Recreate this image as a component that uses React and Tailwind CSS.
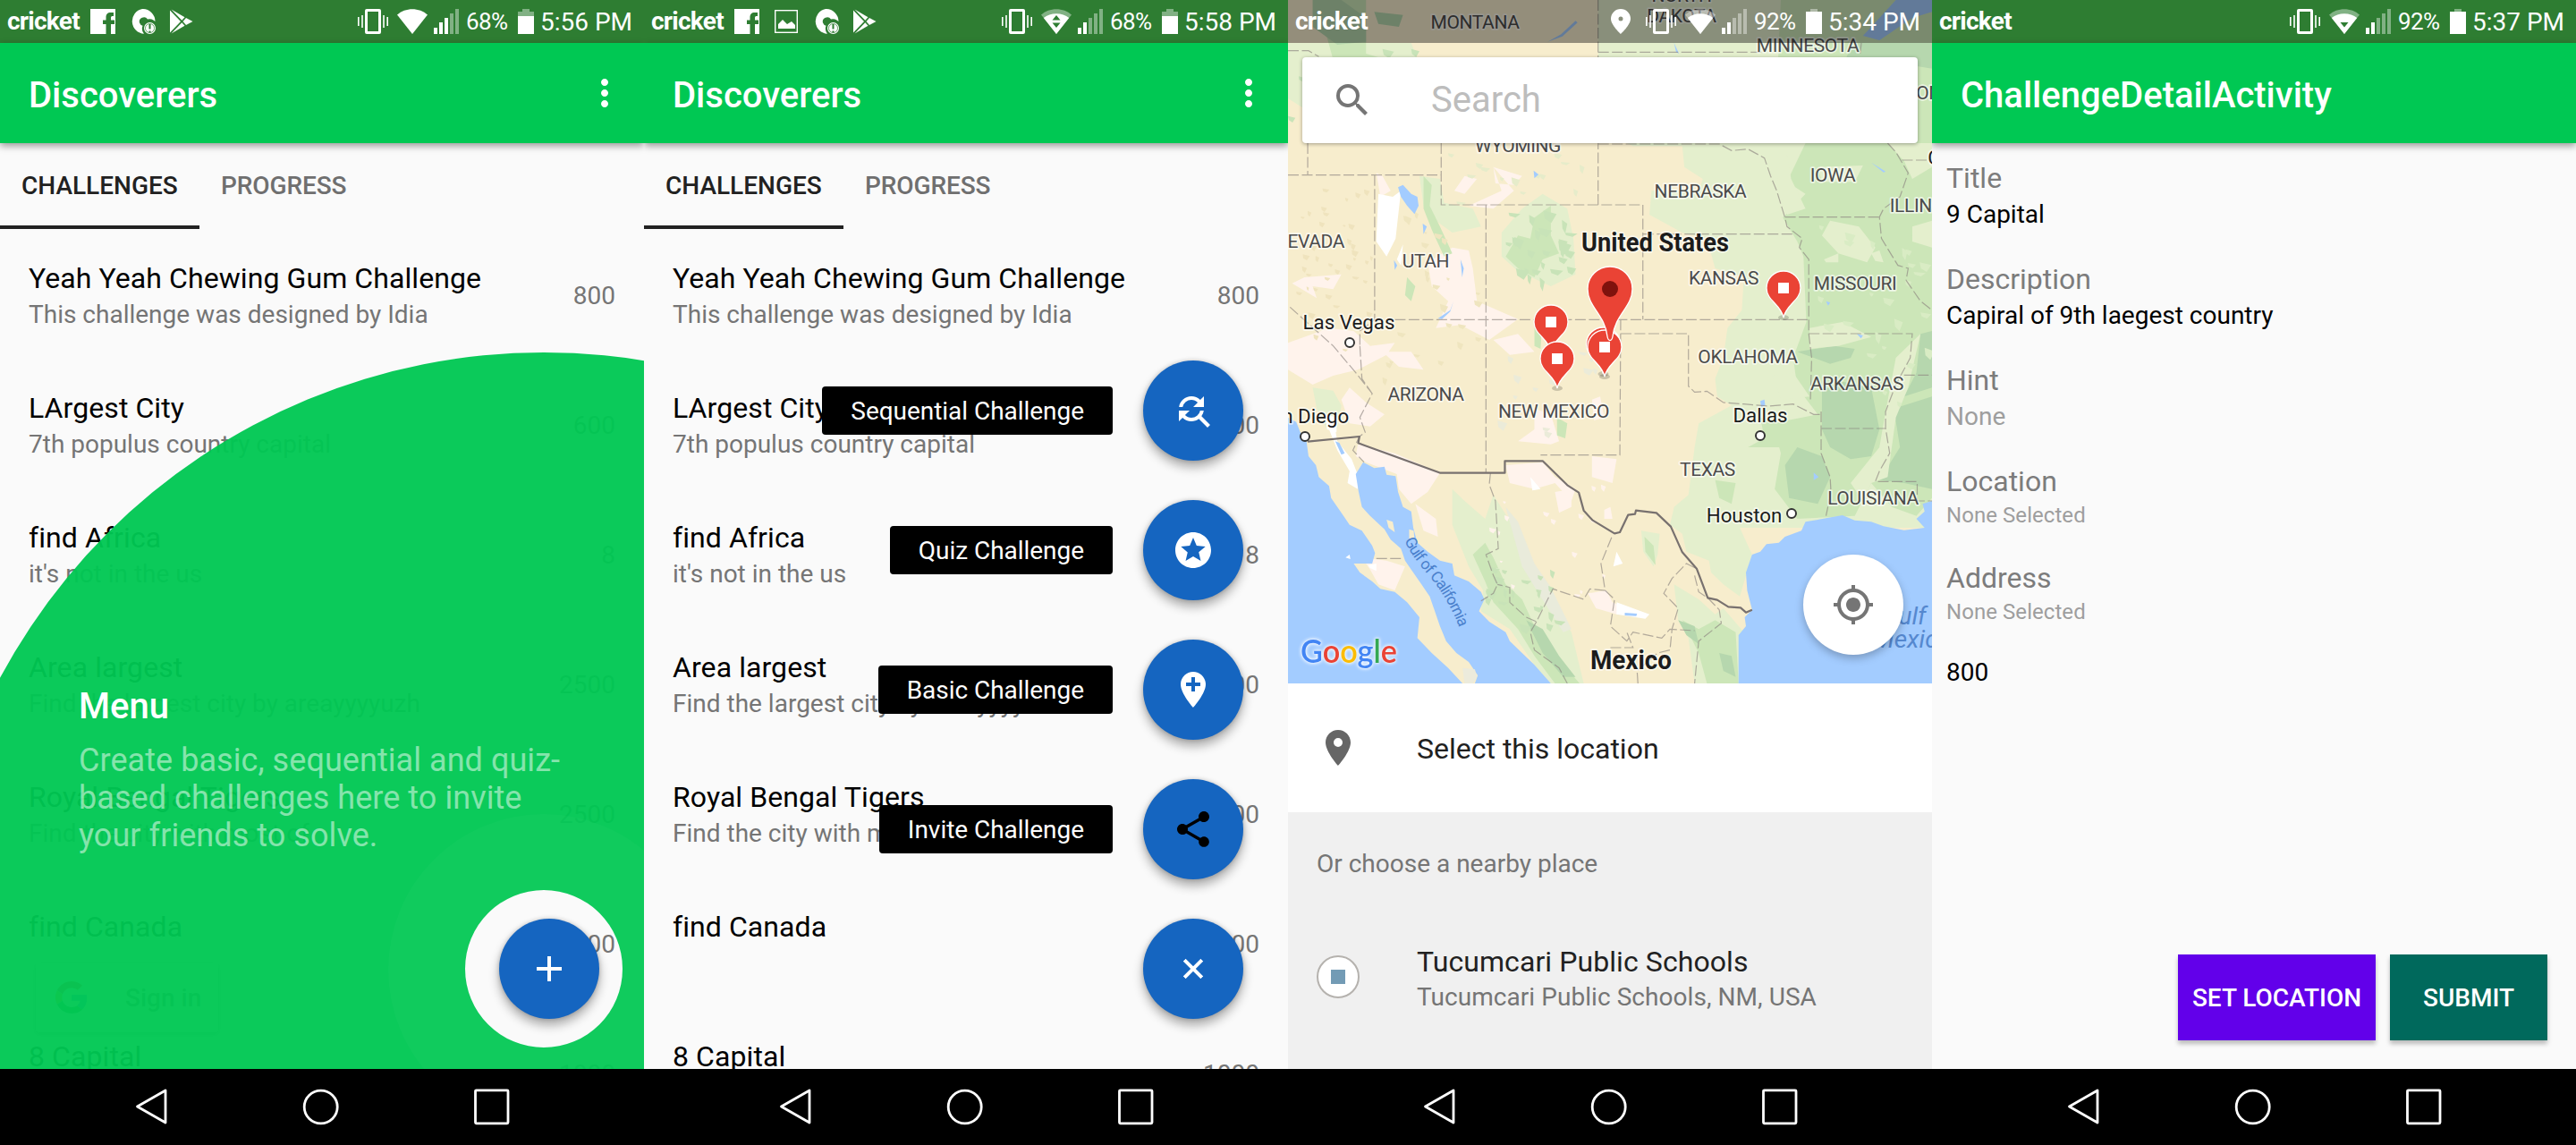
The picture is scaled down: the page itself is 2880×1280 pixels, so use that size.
import React from "react";
import {
  MdAddLocation,
  MdFindReplace,
  MdMoreVert,
  MdMyLocation,
  MdPlace,
  MdSearch,
  MdShare,
  MdStars,
} from "react-icons/md";

/* ---------- status bar ---------- */

function FacebookIcon() {
  return (
    <svg viewBox="0 0 28 28" className="h-7 w-7 shrink-0">
      <path
        fill="#fff"
        fillRule="evenodd"
        d="M0 0h28v28H23V17h4v-4.500h-4V10c0-1.500.6-2 2-2h1V4h-3c-4 0-5.500 2-5.500 5.500v3H14V17h3.500v11H0z"
      />
    </svg>
  );
}

function ImageIcon() {
  return (
    <svg viewBox="0 0 28 28" className="h-7 w-7 shrink-0">
      <rect x="1.700" y="1.700" width="24.600" height="24.600" fill="none" stroke="#fff" strokeWidth="1.400" />
      <path d="M5 22v-5l5-5 5 5 5-3 4 4v4z" fill="#fff" />
    </svg>
  );
}

function DiscAlertIcon() {
  return (
    <svg viewBox="0 0 29 28" className="h-7 w-[29px] shrink-0">
      <path
        fill="#fff"
        fillRule="evenodd"
        d="M14 0a14 14 0 0 1 14.500 14l-2-1.500a8 8 0 0 0-6.500-1 5 5 0 0 0-9 4 5 5 0 0 0 3.500 3.200 9 9 0 0 0 1.500 9A14 14 0 0 1 14 0z"
      />
      <circle cx="22.500" cy="21.500" r="6.500" fill="#fff" />
      <path d="M22.500 17v5.500M22.500 24.500v2" stroke="#2e7d32" strokeWidth="2" />
      <circle cx="22.500" cy="21.500" r="5" fill="none" stroke="#2e7d32" strokeWidth=".7" />
    </svg>
  );
}

function PlayIcon() {
  return (
    <svg viewBox="0 0 26 28" className="h-7 w-[26px] shrink-0" fill="#fff">
      <path d="M0 1.500v25L12 14z" />
      <path d="M1.500.5 13.300 12.700l3.200-3.400z" />
      <path d="M1.500 27.500 13.300 15.300l3.200 3.400z" />
      <path d="m18 10 7.500 4-7.500 4-3.500-4z" />
    </svg>
  );
}

function VibrateIcon() {
  return (
    <svg viewBox="0 0 34 28" className="h-7 w-[34px] shrink-0">
      <path
        fill="#fff"
        fillRule="evenodd"
        d="M10 0h14a2 2 0 0 1 2 2v24a2 2 0 0 1-2 2H10a2 2 0 0 1-2-2V2a2 2 0 0 1 2-2zM11 3v22h12V3z"
      />
      <path d="M.8 9v10M5 7v14M33.200 9v10M29 7v14" stroke="#fff" strokeWidth="1.600" />
    </svg>
  );
}

function WifiIcon({ mode }) {
  return (
    <svg viewBox="0 0 34 28" className="h-7 w-[34px] shrink-0">
      {mode === "full" ? (
        <path d="M17 28 0 6.500C9-2 25-2 34 6.500z" fill="#fff" />
      ) : (
        <>
          <path d="M17 28 0 6.500C9-2 25-2 34 6.500z" fill="#fff" opacity=".4" />
          <path d="M17 28 2.800 10C10 3.500 24 3.500 31.200 10z" fill="#fff" />
        </>
      )}
      {mode === "both" && (
        <g fill="#2e7d32">
          <path d="M12.500 12.500 17 7l4.500 5.500z" />
          <path d="M12.500 15.500h9L17 21z" />
        </g>
      )}
      {mode === "down" && <path d="M12.500 15h9L17 20.500z" fill="#2e7d32" />}
    </svg>
  );
}

function SignalIcon({ level }) {
  const heights = [7, 13, 18, 23, 28];
  return (
    <svg viewBox="0 0 28 28" className="h-7 w-7 shrink-0">
      {heights.map((h, i) => (
        <rect key={h} x={i * 6} y={28 - h} width="4" height={h} fill="#fff" opacity={i < level ? 1 : 0.4} />
      ))}
    </svg>
  );
}

function BatteryIcon({ top }) {
  return (
    <svg viewBox="0 0 18 28" className="h-7 w-[18px] shrink-0" fill="#fff">
      <path d="M5 0h8v3h5v25H0V3h5z" opacity=".4" />
      <rect y={top} width="18" height={28 - top} />
    </svg>
  );
}

function StatusBar({ left, pin, wifi, signal, percent, battery, time, className }) {
  return (
    <div className={"flex h-12 items-center pl-2 text-white " + className}>
      <span className="w-[93px] text-[28px] font-bold tracking-[-0.75px]">cricket</span>
      <div className="flex gap-4">{left}</div>
      <div className="ml-auto flex items-center">
        {pin && (
          <svg viewBox="0 0 22 28" className="mr-[17px] h-7 w-[22px]">
            <path fill="#fff" fillRule="evenodd" d="M11 0a11 11 0 0 1 11 11c0 7-11 17-11 17S0 18 0 11A11 11 0 0 1 11 0zm0 8.500a2.500 2.500 0 1 0 0 5 2.500 2.500 0 0 0 0-5z" />
          </svg>
        )}
        <VibrateIcon />
        <span className="ml-2.5 flex">
          <WifiIcon mode={wifi} />
        </span>
        <span className="ml-[7px] flex">
          <SignalIcon level={signal} />
        </span>
        <span className="ml-2 w-[58px] pt-px text-[26px] tracking-[-0.6px]">{percent}</span>
        <BatteryIcon top={battery} />
        <span className="ml-[7px] w-[116px] whitespace-nowrap pt-px text-[28px]">{time}</span>
      </div>
    </div>
  );
}

/* ---------- shared chrome ---------- */

function AppBar({ title, menu }) {
  return (
    <div className="relative z-10 flex h-28 items-center justify-between bg-[#00c853] pl-8 pr-5 text-white shadow-[0_3px_8px_rgba(0,0,0,0.4)]">
      <h1 className="pt-[5px] text-[40px] font-medium leading-[52px]">{title}</h1>
      {menu && <MdMoreVert className="h-12 w-12" />}
    </div>
  );
}

function NavBar() {
  return (
    <div className="relative z-30 flex h-[85px] shrink-0 items-center bg-black">
      <svg viewBox="0 0 720 85" className="h-[85px] w-[720px]" fill="none" stroke="#fff" strokeWidth="2.800">
        <path d="M185 24v36l-31.500-18z" strokeLinejoin="round" />
        <ellipse cx="358.700" cy="42.500" rx="18.500" ry="18.300" />
        <rect x="531.500" y="23.800" width="36.500" height="37" rx="1" />
      </svg>
    </div>
  );
}

function Phone({ children }) {
  return <section className="relative flex h-[1280px] w-[720px] flex-col overflow-hidden bg-[#fafafa]">{children}</section>;
}

function Tabs() {
  return (
    <div className="flex h-24 text-[28px] font-medium leading-[96px]">
      <div className="w-[223px] border-b-4 border-[#212121] pl-6 text-[#212121]">CHALLENGES</div>
      <div className="pl-6 tracking-[-0.1px] text-[#6f6f6f]">PROGRESS</div>
    </div>
  );
}

const challenges = [
  { title: "Yeah Yeah Chewing Gum Challenge", sub: "This challenge was designed by Idia", points: 800 },
  { title: "LArgest City", sub: "7th populus country capital", points: 600 },
  { title: "find Africa", sub: "it's not in the us", points: 8 },
  { title: "Area largest", sub: "Find the largest city by areayyyyuzh", points: 2500 },
  { title: "Royal Bengal Tigers", sub: "Find the city with most of", points: 2500 },
  { title: "find Canada", sub: "", points: 1000 },
  { title: "8 Capital", sub: "", points: 1000 },
];

function ChallengeList() {
  return (
    <ul className="pt-[2px]">
      {challenges.map((c) => (
        <li key={c.title} className="flex h-[145px] items-center justify-between px-8">
          <div>
            <div className="h-10 text-[32px] leading-10 tracking-[0.08px] text-black">{c.title}</div>
            <div className="h-10 text-[28px] leading-[42px] text-[#757575]">{c.sub}</div>
          </div>
          <div className="text-[28px] leading-10 text-[#757575]">{c.points}</div>
        </li>
      ))}
    </ul>
  );
}

function Fab({ children }) {
  return (
    <button className="flex h-28 w-28 shrink-0 items-center justify-center rounded-full bg-[#1565c0] text-white shadow-[0_7px_12px_rgba(0,0,0,0.32),0_0_5px_rgba(0,0,0,0.18)]">
      {children}
    </button>
  );
}

/* ---------- screen 1: feature discovery ---------- */

function DiscoveryScreen() {
  return (
    <Phone>
      <StatusBar
        className="bg-[#2e7d32]"
        left={
          <>
            <FacebookIcon />
            <DiscAlertIcon />
            <PlayIcon />
          </>
        }
        wifi="full"
        signal={3}
        percent="68%"
        battery={8}
        time="5:56 PM"
      />
      <AppBar title="Discoverers" menu />
      <div className="relative h-[1035px] overflow-hidden">
        <Tabs />
        <ChallengeList />
        <div className="absolute left-10 top-[916px] flex h-[78px] w-[204px] items-center rounded bg-white pl-[22px] text-[28px] font-medium text-[#757575] shadow-[0_2px_5px_rgba(0,0,0,0.4)]">
          <svg viewBox="0 0 48 48" className="mr-[42px] h-9 w-9">
            <path fill="#EA4335" d="M24 9.500c3.500 0 6.700 1.200 9.200 3.600l6.900-6.900C35.900 2.400 30.500 0 24 0 14.600 0 6.500 5.400 2.600 13.200l8 6.200C12.400 13.700 17.700 9.500 24 9.500z" />
            <path fill="#4285F4" d="M47 24.600c0-1.600-.2-3.100-.4-4.600H24v9h12.900c-.6 3-2.300 5.500-4.800 7.200l7.700 6C44.400 38 47 32 47 24.600z" />
            <path fill="#FBBC05" d="M10.500 28.600a14.500 14.500 0 0 1 0-9.200l-8-6.200a24 24 0 0 0 0 21.600z" />
            <path fill="#34A853" d="M24 48c6.500 0 11.900-2.100 15.900-5.800l-7.700-6c-2.200 1.500-4.900 2.300-8.200 2.300-6.300 0-11.600-4.200-13.500-9.900l-8 6.200C6.500 42.600 14.600 48 24 48z" />
          </svg>
          <span className="pt-0.5">Sign in</span>
        </div>
        <svg viewBox="0 0 720 1035" className="absolute left-0 top-0 h-[1035px] w-[720px]">
          <path
            fill="#00c853"
            fillOpacity=".955"
            fillRule="evenodd"
            d="M-82 924a690 690 0 1 1 1380 0a690 690 0 1 1-1380 0zM520 923a88 88 0 1 0 176 0a88 88 0 1 0-176 0z"
          />
          <path
            fill="#fff"
            fillOpacity=".025"
            fillRule="evenodd"
            d="M434 924a174 174 0 1 1 348 0a174 174 0 1 1-348 0zM520 923a88 88 0 1 0 176 0a88 88 0 1 0-176 0z"
          />
        </svg>
        <div className="absolute left-[88px] top-[606px] w-[560px] text-white">
          <h2 className="text-[40px] font-medium leading-[48px]">Menu</h2>
          <p className="mt-[15px] text-[36px] leading-[42px] tracking-[0.06px] text-white/50">
            Create basic, sequential and quiz-
            <br />
            based challenges here to invite
            <br />
            your friends to solve.
          </p>
        </div>
        <div className="absolute left-[558px] top-[867px]">
          <Fab>
            <svg viewBox="0 0 28 28" className="h-7 w-7">
              <path d="M14 0v28M0 14h28" stroke="#fff" strokeWidth="4" />
            </svg>
          </Fab>
        </div>
      </div>
      <NavBar />
    </Phone>
  );
}

/* ---------- screen 2: expanded speed dial ---------- */

const actions = [
  { label: "Sequential Challenge", icon: <MdFindReplace className="h-12 w-12" /> },
  { label: "Quiz Challenge", icon: <MdStars className="h-12 w-12" /> },
  { label: "Basic Challenge", icon: <MdAddLocation className="h-12 w-12" /> },
  { label: "Invite Challenge", icon: <MdShare className="h-12 w-12 text-black" /> },
];

function SpeedDialScreen() {
  return (
    <Phone>
      <StatusBar
        className="bg-[#2e7d32]"
        left={
          <>
            <FacebookIcon />
            <ImageIcon />
            <DiscAlertIcon />
            <PlayIcon />
          </>
        }
        wifi="both"
        signal={2}
        percent="68%"
        battery={8}
        time="5:58 PM"
      />
      <AppBar title="Discoverers" menu />
      <div className="relative h-[1035px] overflow-hidden">
        <Tabs />
        <ChallengeList />
        <div className="absolute right-[50px] top-[243px] flex flex-col items-end gap-11">
          {actions.map((a) => (
            <div key={a.label} className="flex items-center gap-[34px]">
              <span className="h-[54px] rounded bg-black px-8 text-[28px] leading-[56px] tracking-[-0.04px] text-white">{a.label}</span>
              <Fab>{a.icon}</Fab>
            </div>
          ))}
          <Fab>
            <svg viewBox="0 0 28 28" className="h-7 w-7 rotate-45">
              <path d="M14 0v28M0 14h28" stroke="#fff" strokeWidth="4" />
            </svg>
          </Fab>
        </div>
      </div>
      <NavBar />
    </Phone>
  );
}

/* ---------- screen 3: place picker ---------- */

const stateLines = [
  "M0 587H373",
  "M48 480V587M0 170H50L75 190",
  "M373 480V687H864",
  "M755 0V687",
  "M211 587V1072L175 1110V1160",
  "M482 687V1586",
  "M260 1072H1268",
  "M864 687V1072M864 785H1232",
  "M755 175H1160",
  "M755 483H1050L1080 505L1120 500L1160 530L1175 590L1190 640L1210 730L1215 760L1252 800L1245 830L1268 870V1120L1275 1200L1272 1340",
  "M1210 728H1440",
  "M1396 144L1392 190M1460 480L1480 510L1510 580L1490 660L1450 700L1440 728L1445 800L1485 890L1510 900L1505 940L1540 1010L1568 1040",
  "M1268 1119H1520L1515 1200L1480 1290L1455 1380V1437L1465 1520L1440 1580L1430 1615H1532V1680H1568",
  "M1495 537H1568M1500 1258H1568",
  "M810 1072L808 1526H615",
  "M810 1119H975V1295L990 1315L1020 1312L1060 1350L1110 1355L1170 1362L1230 1355L1280 1390H1298",
  "M1298 1380V1520L1320 1600L1322 1650L1310 1730M1298 1437H1455",
  "M5 1030L110 1160L165 1250L205 1320",
  "M175 1160L180 1270L205 1320L175 1400L188 1450L174 1464L158 1510L185 1550",
  "M493 1586L490 1625L505 1680L512 1840L482 1860L500 1930L510 1960L500 1990L470 2015",
  "M788 1802L762 1890L772 1980L735 1975L720 2010L645 1975L625 2030L605 2085L580 2070L540 2020L540 1970L510 1960",
  "M605 2085L590 2120L600 2180L660 2240L680 2292",
  "M772 1980L795 2010L785 2100L825 2150L840 2120L910 2140L930 2110L990 2115",
  "M785 2172H840L825 2120",
  "M852 2292L850 2250L900 2190L930 2180L935 2110L950 2040L915 1990L935 1940L970 1890L995 1907",
  "M990 1930L1000 1985L1022 2005L1050 2045L1055 2090L1000 2150L990 2292",
  "M215 1873H280",
];

const paleGreen = [
  "M755 0H1568V1770H1100L1130 1860L1100 2000L1060 1960L1030 1920L1025 1880L970 1850L960 1790L930 1760L940 1700L975 1660L990 1500L1000 1420L1080 1360L1045 1330L1040 1270L1060 1200L1070 1100L1105 1040L1110 930L1040 900L1020 800L960 780L880 720L885 640L1000 640L1010 600L965 560L960 490L840 490L755 430Z",
  "M400 1640L430 1680L480 1740L500 1660L560 1790L600 1900L640 2010L690 2120L720 2292H640L600 2230L540 2110L470 2050L475 1980L440 1900L400 1760Z",
  "M320 590L370 600L380 680L450 700L470 760L400 780L360 740L330 690Z",
  "M520 780L570 700L620 650L680 700L695 800L700 920L640 960L560 910L520 860Z",
  "M940 1960L1000 2010L1040 2060L1060 2040L1110 2120L1097 2292H990L975 2140L950 2080Z",
  "M0 144H300L330 250L300 400H80L0 330Z",
  "M860 1780L905 1790L900 1860L890 1900L865 1850Z",
  "M60 1300L110 1310L130 1360L120 1440L95 1440L70 1370Z",
];

const midGreen = [
  "M1200 0H1568V1670L1530 1730L1470 1700L1420 1620L1380 1730L1240 1740L1185 1640L1200 1520L1180 1420L1290 1390L1240 1300L1230 1200L1262 1080L1255 860L1240 810L1205 730L1260 650L1215 610L1260 480L1190 300Z",
  "M530 860L560 790L590 800L600 730L640 690L640 790L660 850L620 870L600 930L560 900Z",
  "M450 1860L480 1820L500 1870L530 1960L570 2010L600 2100L640 2180L710 2292H650L600 2200L560 2110L500 2020L480 1950Z",
  "M960 2080L1000 2110L1040 2080L1090 2120L1097 2292H1020L1000 2190Z",
  "M868 1800L890 1830L895 1895L870 1850Z",
  "M70 0H190V180L240 200L150 230L110 200Z",
  "M1120 1500L1160 1470L1150 1400L1200 1420L1200 1500Z",
  "M1040 1610L1090 1620L1080 1690L1050 1670Z",
  "M330 590L350 620L345 690L370 760L400 850L380 860L350 770L330 700Z",
  "M290 930L310 960L300 1010L285 990Z",
  "M600 1060L620 1050L615 1170L600 1160Z",
  "M655 1400L680 1420L675 1470L655 1460Z",
];

const darkGreen = [
  "M1210 1560L1240 1500L1300 1530L1320 1600L1290 1690L1220 1670Z",
  "M1300 1310L1350 1280L1420 1300L1430 1370L1440 1440L1420 1530L1370 1540L1320 1500L1300 1440Z",
  "M1475 1370L1568 1330V1640L1500 1620L1440 1610L1490 1500Z",
  "M1240 1180L1330 1160L1380 1170L1370 1200L1320 1220Z",
  "M1540 1120L1568 1110V1300L1500 1330L1530 1250Z",
  "M1380 144H1568V230L1480 210L1420 280L1360 190Z",
  "M60 0L130 0L190 60V140L120 150L60 90Z",
  "M210 40L280 50L270 90L220 80Z",
  "M580 2080L620 2110L660 2200L700 2270L670 2270L620 2190Z",
  "M1050 2190L1080 2200L1090 2270L1060 2250Z",
  "M950 2080L990 2100L1000 2160L970 2130Z",
];

const palePatches = [
  "M1190 560L1215 520L1225 600L1260 700L1215 720L1195 640Z",
  "M1290 560L1400 555L1380 610L1300 610Z",
  "M1320 740L1390 760L1430 830L1410 880L1340 850L1300 790Z",
  "M1460 480H1568V560L1520 600L1500 540Z",
  "M1305 870L1340 850L1340 880L1310 880Z",
  "M1420 850L1440 840L1450 880L1430 875Z",
  "M1480 1200L1540 1120L1510 1300L1480 1400L1460 1600L1420 1620L1400 1680L1370 1620L1440 1500L1455 1380Z",
  "M1270 1100L1350 1080L1420 1130L1340 1160L1270 1170Z",
  "M1180 1260L1230 1250L1270 1330L1200 1340Z",
  "M1520 760L1568 740V830L1520 810Z",
];

const sand = [
  "M340 880L400 830L440 840L450 900L460 1010L560 1070L490 1140L420 1090L360 1100L390 1010L350 960Z",
  "M0 1150L100 1100L160 1110L200 1160L260 1150L240 1190L170 1240L110 1260L60 1290L0 1240Z",
  "M130 1340L150 1300L190 1350L235 1390L200 1430L150 1420Z",
  "M170 1490L260 1520L370 1586L340 1650L300 1690L270 1640L265 1590L190 1550L165 1530Z",
  "M500 560L520 640L440 690L500 700L550 640Z",
  "M500 560L570 590L550 620L505 615Z",
  "M405 640L430 590L460 600L430 650Z",
  "M500 1140L560 1120L600 1180L540 1190Z",
  "M530 1560L620 1550L650 1600L700 1640L690 1680L650 1620L600 1640L540 1620Z",
  "M740 1530L800 1540L790 1620L740 1600Z",
  "M650 1650L690 1640L690 1700L660 1720Z",
  "M600 1370L640 1390L660 1480L640 1490L560 1480L600 1440Z",
  "M180 1870L240 1880L285 1900L260 1980L220 1960L200 1910Z",
  "M730 1990L775 1980L790 2020L860 2060L800 2060L750 2040Z",
  "M310 1690L360 1740L365 1800L330 1780Z",
  "M770 1710L785 1700L790 1740L770 1740Z",
  "M225 660L215 580L230 590L250 640Z",
  "M230 1180L300 1180L330 1240L270 1230Z",
  "M740 1340L760 1330L770 1400L745 1410Z",
  "M40 930L130 920L110 970L60 960L70 1000L10 950Z",
];

const white = [
  "M220 650L255 660L275 640L262 800L240 860L215 810Z",
  "M280 820L265 870L275 890Z",
  "M110 1400L120 1480L155 1540L172 1600L170 1640L145 1620L150 1580L120 1510L100 1440Z",
  "M590 1600L615 1640L595 1645Z",
  "M800 1850L815 1890L792 1900Z",
  "M800 2020L880 2060L870 2075L800 2060Z",
  "M90 1390L120 1400L118 1450L95 1440Z",
];

const water = [
  "M268 628L280 620L300 650L315 660L318 690L308 718L290 690L275 660Z",
  "M328 750L338 760L330 785Z",
  "M258 872L266 890L260 905Z",
  "M598 572L610 585L600 598Z",
  "M940 144L952 180L945 175Z",
  "M365 1068L395 1040L403 1010L395 1045L375 1070Z",
  "M115 1480L125 1485L138 1520L130 1525Z",
  "M1420 545L1455 575L1450 578Z",
  "M1280 1585L1292 1600L1280 1610Z",
  "M1150 1345L1160 1340L1162 1360L1152 1365Z",
  "M1385 1120L1400 1125L1395 1135Z",
  "M1310 1010L1320 1015L1315 1025Z",
  "M820 2055L850 2058L848 2066L820 2064Z",
  "M420 870L428 900L424 930Z",
  "M1480 0H1568V40L1520 60L1440 135L1400 120L1440 60Z",
  "M632 140L665 115L700 70L705 76L668 122Z",
];

/* Small terrain flecks, spread by a fixed pseudo-random sequence. */
function flecks(seed, count, x0, y0, w, h, size) {
  let s = seed;
  const next = () => {
    s = (s * 16807) % 2147483647;
    return s / 2147483647;
  };
  let d = "";
  for (let i = 0; i < count; i++) {
    const x = Math.round(x0 + next() * w);
    const y = Math.round(y0 + next() * h);
    const a = Math.round(size * (0.4 + next()));
    const b = Math.round(size * (0.4 + next()));
    d += `M${x} ${y}l${a} ${Math.round(b * 0.4)}l${-Math.round(a * 0.4)} ${b}l${-Math.round(a * 0.5)} ${-Math.round(b * 0.5)}z`;
  }
  return d;
}

function Terrain() {
  return (
    <svg viewBox="0 0 1568 2292" preserveAspectRatio="none" className="absolute inset-0 h-[764px] w-[720px]">
      <rect width="1568" height="2292" fill="#f7edcd" />
      <path d={sand.join("")} fill="#fff3ec" />
      <path d={paleGreen.join("")} fill="#e4efcd" />
      <path d="M560 1750L600 1890L640 1970L690 2110L670 2120L610 1990L570 1900L530 1700Z" fill="#e9ebdb" />
      <path d={midGreen.join("")} fill="#cce6b8" />
      <path d={darkGreen.join("")} fill="#b6d7ae" />
      <path d={palePatches.join("")} fill="#e4efcd" />
      <path d={flecks(11, 26, 530, 700, 150, 250, 24)} fill="#c8e3b8" />
      <path d={flecks(5, 40, 20, 610, 180, 560, 13)} fill="#efe3bd" />
      <path d={flecks(23, 26, 220, 700, 240, 640, 16)} fill="#efe5bf" />
      <path d={flecks(7, 22, 0, 150, 330, 260, 26)} fill="#c8e3b8" />
      <path d={flecks(41, 18, 490, 1620, 290, 380, 12)} fill="#fff3ec" />
      <path d={flecks(3, 26, 1290, 740, 260, 640, 22)} fill="#d9ecc4" />
      <path d={flecks(19, 22, 480, 1900, 170, 200, 20)} fill="#c8e3b8" />
      <path d={flecks(31, 14, 390, 500, 340, 180, 18)} fill="#e6ecca" />
      <path d={flecks(37, 14, 510, 1150, 280, 300, 18)} fill="#ebebd9" />
      <path d={white.join("")} fill="#fff" />
      <path d={water.join("")} fill="#a3ccff" />
      <path
        fill="#a3ccff"
        d="M0 1400L20 1415L30 1450L45 1480L50 1530L68 1560L75 1600L100 1630L105 1670L130 1720L150 1760L180 1780L205 1830L212 1855L205 1890L160 1890L175 1920L205 1950L225 1975L260 1985L290 2020L320 2070L315 2140L350 2190L390 2240L425 2292H0Z"
      />
      <path
        fill="#a3ccff"
        d="M183 1550L210 1570L235 1565L240 1592L262 1597L268 1650L280 1700L300 1715L305 1770L315 1820L340 1850L370 1880L400 1890L405 1930L440 1950L470 1985L478 2010L465 2050L490 2085L530 2120L540 2150L570 2190L600 2230L640 2292H455L462 2265L440 2220L410 2190L385 2150L370 2100L355 2040L345 2000L325 1960L300 1910L285 1880L275 1840L250 1810L235 1775L200 1730L180 1700L172 1650L165 1590Z"
      />
      <path
        fill="#a3ccff"
        d="M1568 1680L1545 1690L1550 1715L1530 1740L1550 1770L1500 1778L1450 1765L1420 1750L1380 1745L1350 1728L1310 1738L1260 1750L1250 1780L1210 1800L1195 1820L1165 1825L1150 1850L1130 1860L1115 1920L1118 1980L1130 2045L1112 2070L1115 2100L1097 2130V2292H1568Z"
      />
      <path d="M240 1743L255 1750L260 1785L245 1770ZM295 1775L306 1780L308 1810L295 1805Z" fill="#f7edcd" />
      <path d="M140 1870L150 1860L152 1875ZM195 1895L215 1890V1915L200 1905Z" fill="#fff" />
      <path d="M425 2240L455 2245L460 2270L450 2292H430Z" fill="#ecebdc" />
      <path
        d={stateLines.join("")}
        fill="none"
        stroke="#8c8480"
        strokeOpacity=".65"
        strokeWidth="1.200"
        strokeDasharray="12 3.500"
        vectorEffect="non-scaling-stroke"
      />
      <path
        d="M48 1481L174 1464L171 1486L371 1586H528V1546H620L680 1627L708 1652L720 1712L741 1744L795 1789L808 1785L828 1727L845 1724L847 1712L897 1720L932 1766L960 1852L995 1907L1022 2005L1045 2012L1072 2035L1102 2038L1115 2054L1130 2045"
        fill="none"
        stroke="#78716f"
        strokeWidth="2.200"
        strokeLinejoin="round"
        vectorEffect="non-scaling-stroke"
      />
    </svg>
  );
}

const stateLabels = [
  ["MONTANA", 209, 32],
  ["NORTH", 440, 2],
  ["DAKOTA", 440, 25],
  ["MINNESOTA", 581, 58],
  ["WYOMING", 257, 170],
  ["IOWA", 609, 203],
  ["NEBRASKA", 461, 221],
  ["ILLINOIS", 712, 237],
  ["UTAH", 154, 299],
  ["NEVADA", 24, 277],
  ["KANSAS", 487, 318],
  ["MISSOURI", 634, 324],
  ["OKLAHOMA", 514, 406],
  ["ARKANSAS", 636, 436],
  ["ARIZONA", 154, 448],
  ["NEW MEXICO", 297, 467],
  ["TEXAS", 469, 532],
  ["LOUISIANA", 654, 564],
  ["WISCONSIN", 708, 111],
];

const cities = [
  ["Las Vegas", 68, 368, 69, 383],
  ["Dallas", 528, 472, 528, 487],
  ["San Diego", 18, 473, 19, 488],
  ["Houston", 510, 584, 563, 574],
  ["Chicago", 756, 184, 800, 184],
];

function SmallPin({ x, y }) {
  return (
    <g transform={`translate(${x} ${y})`}>
      <ellipse cx="0" cy="33" rx="6" ry="3" fill="#000" opacity=".18" />
      <path d="M0 33C-3 18-19 14-19 0a19 19 0 1 1 38 0C19 14 3 18 0 33z" fill="#ea4335" stroke="#fff" strokeWidth="1.300" />
      <rect x="-6" y="-6" width="12" height="12" fill="#fff" />
    </g>
  );
}

function MapLabels() {
  return (
    <svg viewBox="0 0 720 764" className="absolute inset-0 h-[764px] w-[720px]">
      <g fontFamily="Roboto, sans-serif" textAnchor="middle" stroke="#fff" strokeOpacity=".6" strokeWidth="3.500" paintOrder="stroke" strokeLinejoin="round">
        <g fontSize="21" letterSpacing="-.4" fill="#4b4b4b">
          {stateLabels.map(([t, x, y]) => (
            <text key={t} x={x} y={y}>
              {t}
            </text>
          ))}
        </g>
        <g fontSize="22.300" fill="#1c1c1c">
          {cities.map(([t, x, y]) => (
            <text key={t} x={x} y={y}>
              {t}
            </text>
          ))}
        </g>
        <g fontSize="29" fontWeight="700" fill="#1c1c1c">
          <text x="410.500" y="281" textLength="165" lengthAdjust="spacingAndGlyphs">United States</text>
          <text x="383.500" y="748" textLength="91" lengthAdjust="spacingAndGlyphs">Mexico</text>
        </g>
      </g>
      {cities.map(([t, , , cx, cy]) => (
        <circle key={t} cx={cx} cy={cy} r="5" fill="#fff" stroke="#333" strokeWidth="2" />
      ))}
      <path id="gulf" d="M130 604C142 630 158 641 172 663C181 678 187 688 194 708" fill="none" />
      <g fontFamily="Roboto, sans-serif" fill="#4a80cc">
        <text fontSize="17.500">
          <textPath href="#gulf" textLength="116">Gulf of California</textPath>
        </text>
        <g fontSize="28" fontStyle="italic" fill="#5588cf">
          <text x="664" y="698">Gulf of</text>
          <text x="654" y="724">Mexico</text>
        </g>
      </g>

      <SmallPin x={294} y={360} />
      <SmallPin x={352.500} y={385} />
      <SmallPin x={354} y={388} />
      <SmallPin x={301} y={401} />
      <SmallPin x={554} y={322} />
      <path
        d="M360 380.500C358.500 380.500 357.500 379 357 376C354.500 352 335 343 335 323a25 25 0 1 1 50 0C385 343 365.500 352 363 376C362.500 379 361.500 380.500 360 380.500z"
        fill="#ea4335"
        stroke="#fff"
        strokeWidth="1.300"
      />
      <circle cx="360" cy="323" r="9" fill="#7f120d" />

      <text
        x="14"
        y="741"
        fontFamily="Lato, sans-serif"
        fontSize="37"
        fontWeight="600"
        textLength="108"
        lengthAdjust="spacingAndGlyphs"
        className="[filter:drop-shadow(0_0_2px_rgba(255,255,255,0.9))_drop-shadow(0_0_1px_rgba(255,255,255,0.8))]"
      >
        <tspan fill="#4285f4">G</tspan>
        <tspan fill="#ea4335">o</tspan>
        <tspan fill="#fbbc05">o</tspan>
        <tspan fill="#4285f4">g</tspan>
        <tspan fill="#34a853">l</tspan>
        <tspan fill="#ea4335">e</tspan>
      </text>
    </svg>
  );
}

function PlacePickerScreen() {
  return (
    <Phone>
      <div className="relative h-[764px] shrink-0 overflow-hidden">
        <Terrain />
        <MapLabels />
        <div className="relative">
          <StatusBar className="bg-black/40" pin wifi="weak" signal={2} percent="92%" battery={3} time="5:34 PM" />
          <div className="mx-4 mt-4 flex h-24 items-center rounded bg-white pl-8 shadow-[0_1px_4px_rgba(0,0,0,0.35)]">
            <MdSearch className="h-12 w-12 text-[#757575]" />
            <span className="pl-16 text-[40px] text-[#bdbdbd]">Search</span>
          </div>
        </div>
        <div className="absolute left-[576px] top-[620px] flex h-28 w-28 items-center justify-center rounded-full bg-white shadow-[0_4px_10px_rgba(0,0,0,0.25)]">
          <MdMyLocation className="h-12 w-12 text-[#757575]" />
        </div>
      </div>
      <div className="flex h-36 shrink-0 items-center bg-white pl-8">
        <MdPlace className="h-12 w-12 text-[#666]" />
        <span className="pl-16 pt-0.5 text-[32px] text-[#212121]">Select this location</span>
      </div>
      <div className="h-[287px] shrink-0 bg-[#f0f0f0] px-8 pt-[38px]">
        <div className="text-[28px] leading-10 text-[#757575]">Or choose a nearby place</div>
        <div className="mt-[69px] flex items-center">
          <div className="mt-[-6px] flex h-12 w-12 items-center justify-center rounded-full border-2 border-[#b5b2ae] bg-white">
            <div className="h-4 w-4 bg-[#739bb5]" />
          </div>
          <div className="pl-16">
            <div className="h-10 text-[32px] leading-10 tracking-[0.08px] text-[#212121]">Tucumcari Public Schools</div>
            <div className="h-10 text-[28px] leading-10 tracking-[0.06px] text-[#757575]">Tucumcari Public Schools, NM, USA</div>
          </div>
        </div>
      </div>
      <NavBar />
    </Phone>
  );
}

/* ---------- screen 4: challenge detail ---------- */

function Field({ label, children }) {
  return (
    <div className="mb-[33px]">
      <div className="text-[32px] leading-10 text-[#7c7c7c]">{label}</div>
      {children}
    </div>
  );
}

function DetailScreen() {
  return (
    <Phone>
      <StatusBar className="bg-[#2e7d32]" wifi="down" signal={2} percent="92%" battery={3} time="5:37 PM" />
      <AppBar title="ChallengeDetailActivity" />
      <div className="flex h-[1035px] flex-col px-4 pt-[19px]">
        <Field label="Title">
          <div className="h-10 text-[28px] leading-[42px] text-black">9 Capital</div>
        </Field>
        <Field label="Description">
          <div className="h-10 text-[28px] leading-[42px] text-black">Capiral of 9th laegest country</div>
        </Field>
        <Field label="Hint">
          <div className="h-10 text-[28px] leading-[42px] text-[#9e9e9e]">None</div>
        </Field>
        <Field label="Location">
          <div className="h-[35px] text-2xl leading-9 tracking-[0.06px] text-[#9e9e9e]">None Selected</div>
        </Field>
        <Field label="Address">
          <div className="h-[35px] text-2xl leading-9 tracking-[0.06px] text-[#9e9e9e]">None Selected</div>
        </Field>
        <div className="mt-[-2px] text-[28px] leading-10 text-black">800</div>
        <div className="mb-8 mr-4 mt-auto flex justify-end gap-4 text-[28px] font-medium text-white">
          <button className="h-24 w-[221px] whitespace-nowrap bg-[#6200ea] pt-0.5 shadow-[0_4px_5px_rgba(0,0,0,0.25)]">SET LOCATION</button>
          <button className="h-24 w-44 bg-[#00695c] pt-0.5 shadow-[0_4px_5px_rgba(0,0,0,0.25)]">SUBMIT</button>
        </div>
      </div>
      <NavBar />
    </Phone>
  );
}

export default function App() {
  return (
    <main className="flex h-[1280px] w-[2880px] overflow-hidden font-[Roboto,sans-serif]">
      <DiscoveryScreen />
      <SpeedDialScreen />
      <PlacePickerScreen />
      <DetailScreen />
    </main>
  );
}
